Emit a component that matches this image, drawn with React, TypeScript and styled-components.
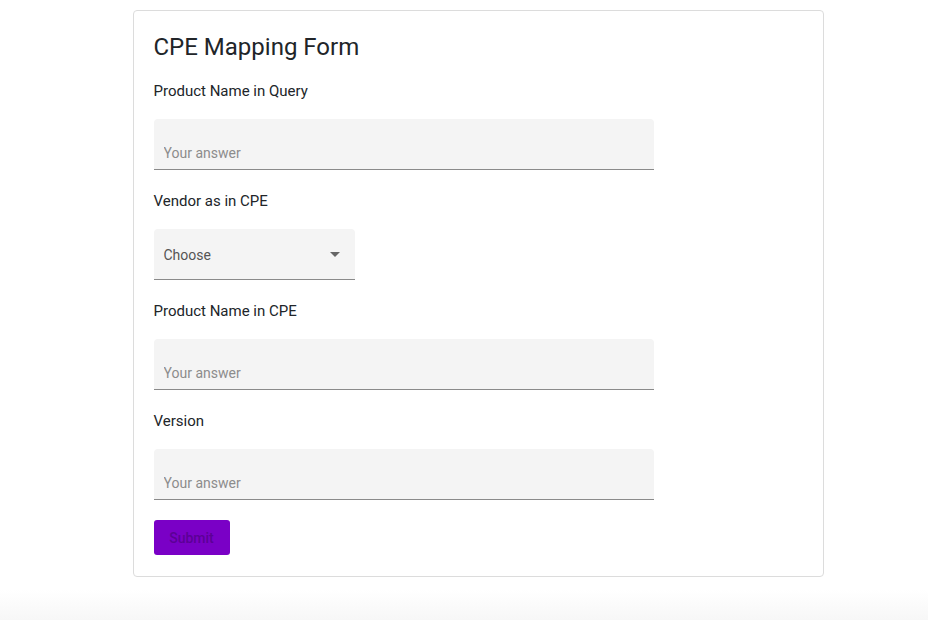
import React from "react";
import styled, { createGlobalStyle } from "styled-components";

const GlobalStyle = createGlobalStyle`
  * { box-sizing: border-box; }
  html, body {
    margin: 0;
    padding: 0;
    min-height: 100%;
  }
  body {
    height: 620px;
    font-family: Roboto, "Liberation Sans", Arial, sans-serif;
    color: #212529;
    background: linear-gradient(to bottom, #ffffff 0, #ffffff 590px, #f7f7f7 620px);
  }
`;

const Page = styled.main`
  display: flex;
  justify-content: center;
  padding: 10px 0 0 28px;
`;

const Card = styled.form`
  width: 691px;
  border: 1px solid #dcdcdc;
  border-radius: 4px;
  background: #fff;
  padding: 20px 20px 21px 20px;
  display: flex;
  flex-direction: column;
`;

const Title = styled.h1`
  margin: 2px 0 19px;
  font-size: 24px;
  font-weight: 400;
  line-height: 29px;
  color: #212529;
`;

const Field = styled.div`
  display: flex;
  flex-direction: column;
  align-items: flex-start;
  margin-bottom: 21px;
`;

const Label = styled.label`
  font-size: 15px;
  line-height: 20px;
  color: #212529;
  margin-bottom: 18px;
`;

const Filled = styled.div<{ $width: number }>`
  position: relative;
  width: ${(p) => p.$width}px;
  height: 51px;
  background: #f4f4f4;
  border-bottom: 1px solid #8a8a8a;
  border-radius: 4px 4px 0 0;
`;

const TextInput = styled.input`
  width: 100%;
  height: 100%;
  border: none;
  outline: none;
  background: transparent;
  padding: 17px 10px 0;
  font-family: inherit;
  font-size: 14px;
  color: #212529;
  &::placeholder {
    color: #8c8c8c;
  }
`;

const SelectBox = styled.div`
  display: flex;
  align-items: center;
  justify-content: space-between;
  height: 100%;
  padding: 1px 15px 0 10px;
  font-size: 14px;
  color: #555;
  cursor: pointer;
`;

const Arrow = styled.span`
  width: 0;
  height: 0;
  border-left: 5px solid transparent;
  border-right: 5px solid transparent;
  border-top: 5px solid #666;
`;

const Submit = styled.button`
  align-self: flex-start;
  margin-top: -1px;
  width: 76px;
  height: 35px;
  border: none;
  border-radius: 3px;
  background: #7a00c6;
  color: #5c0096;
  font-family: inherit;
  font-size: 14px;
  font-weight: 500;
  cursor: pointer;
`;

const TextField: React.FC<{ label: string; id: string }> = ({ label, id }) => (
  <Field>
    <Label htmlFor={id}>{label}</Label>
    <Filled $width={500}>
      <TextInput id={id} placeholder="Your answer" />
    </Filled>
  </Field>
);

export default function App() {
  return (
    <>
      <GlobalStyle />
      <Page>
        <Card onSubmit={(e) => e.preventDefault()}>
          <Title>CPE Mapping Form</Title>
          <TextField id="query" label="Product Name in Query" />
          <Field>
            <Label>Vendor as in CPE</Label>
            <Filled $width={201}>
              <SelectBox>
                <span>Choose</span>
                <Arrow />
              </SelectBox>
            </Filled>
          </Field>
          <TextField id="product" label="Product Name in CPE" />
          <TextField id="version" label="Version" />
          <Submit type="submit">Submit</Submit>
        </Card>
      </Page>
    </>
  );
}
